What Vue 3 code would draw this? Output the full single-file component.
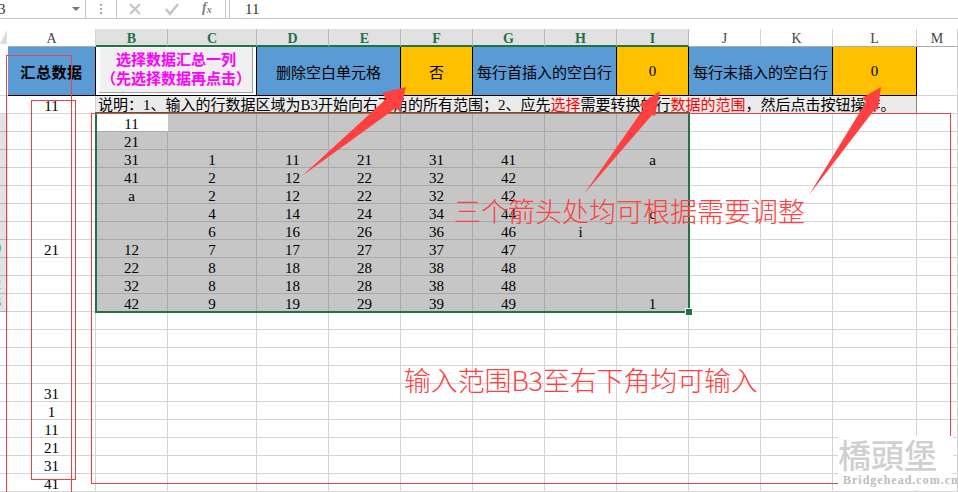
<script setup>
const columns = ['A', 'B', 'C', 'D', 'E', 'F', 'G', 'H', 'I', 'J', 'K', 'L', 'M']
const selectedColumns = 'BCDEFGHI'

const bands = [
  { text: '删除空白单元格', cls: 'blue span2' },
  { text: '否', cls: 'gold' },
  { text: '每行首插入的空白行', cls: 'blue span2' },
  { text: '0', cls: 'gold' },
  { text: '每行末插入的空白行', cls: 'blue span2' },
  { text: '0', cls: 'gold' }
]

const selectedData = {
  3: ['11', '', '', '', '', '', '', ''],
  4: ['21', '', '', '', '', '', '', ''],
  5: ['31', '1', '11', '21', '31', '41', '', 'a'],
  6: ['41', '2', '12', '22', '32', '42', '', ''],
  7: ['a', '2', '12', '22', '32', '42', '', ''],
  8: ['', '4', '14', '24', '34', '44', '', 'c'],
  9: ['', '6', '16', '26', '36', '46', 'i', ''],
  10: ['12', '7', '17', '27', '37', '47', '', ''],
  11: ['22', '8', '18', '28', '38', '48', '', ''],
  12: ['32', '8', '18', '28', '38', '48', '', ''],
  13: ['42', '9', '19', '29', '39', '49', '', '1']
}
const summary = { 10: '21', 18: '31', 19: '1', 20: '11', 21: '21', 22: '31', 23: '41' }

const rows = []
for (let n = 3; n <= 23; n++) {
  rows.push({ n, summary: summary[n] || '', data: selectedData[n] || null })
}

const arrows = [
  '302,176 386,99 382,93 406,87 400,112 396,108',
  '584,194 644,108 639,105 660,91 655,116 652,115',
  '809,195 866,102 862,98 881,87 878,110 875,109'
]
</script>

<template>
  <div class="page">
    <div class="toolbar">
      <div class="namebox">
        <span class="nameval">3</span>
        <i class="caret"></i>
      </div>
      <div class="grip"><i></i><i></i><i></i></div>
      <div class="fxbtns">
        <svg width="14" height="14" viewBox="0 0 14 14"><path d="M2 2l10 10M12 2L2 12" stroke="#c4c4c4" stroke-width="2" fill="none" /></svg>
        <svg width="16" height="14" viewBox="0 0 16 14"><path d="M2 7l4 5 8-10" stroke="#c4c4c4" stroke-width="2.4" fill="none" /></svg>
        <span class="fx">f<sub>x</sub></span>
      </div>
      <div class="formula">11</div>
    </div>

    <div class="sheet">
      <div class="corner"><i></i></div>
      <div
        v-for="c in columns"
        :key="c"
        class="colhead"
        :class="{ on: selectedColumns.includes(c) }"
      >{{ c }}</div>

      <div class="rowhead"></div>
      <div class="band blue title">汇总数据</div>
      <div class="band span2 btnwrap">
        <div class="btn">选择数据汇总一列<br />（先选择数据再点击）</div>
      </div>
      <div v-for="(b, i) in bands" :key="i" class="band" :class="b.cls">{{ b.text }}</div>
      <div class="cell"></div>

      <div class="rowhead"></div>
      <div class="cell">11</div>
      <div class="note">说明：1、输入的行数据区域为B3开始向右下角的所有范围；2、应先<span class="hot">选择</span>需要转换的行<span class="hot">数据的范围</span>，然后点击按钮操作。</div>
      <div class="cell"></div>

      <template v-for="r in rows" :key="r.n">
        <div class="rowhead" :class="{ on: r.data }"><span>{{ r.data ? r.n : '' }}</span></div>
        <div class="cell">{{ r.summary }}</div>
        <template v-if="r.data">
          <div
            v-for="(v, i) in r.data"
            :key="i"
            class="cell sel"
            :class="{ active: r.n === 3 && i === 0 }"
          >{{ v }}</div>
        </template>
        <template v-else>
          <div v-for="i in 8" :key="i" class="cell"></div>
        </template>
        <div v-for="i in 4" :key="'t' + i" class="cell"></div>
      </template>
    </div>

    <div class="selection"><i class="handle"></i></div>

    <div class="mark m1"></div>
    <div class="mark m2"></div>
    <div class="mark m3"></div>

    <svg class="arrows" width="958" height="492" viewBox="0 0 958 492">
      <polygon v-for="(p, i) in arrows" :key="i" :points="p" fill="#ff4040" />
    </svg>

    <div class="say say1">三个箭头处均可根据需要调整</div>
    <div class="say say2">输入范围B3至右下角均可输入</div>

    <div class="stamp">
      <div class="stamp-cn">橋頭堡</div>
      <div class="stamp-en">Bridgehead.com.cn</div>
    </div>
  </div>
</template>

<style scoped>
.page {
  position: relative;
  width: 958px;
  height: 492px;
  overflow: hidden;
  background: #fff;
  font-family: "Liberation Serif", "Noto Sans CJK SC", serif;
  font-size: 15px;
  color: #000;
}

.toolbar {
  display: flex;
  height: 19px;
  margin-bottom: 10px;
  border-bottom: 1px solid #c6c6c6;
  box-sizing: border-box;
}
.namebox {
  width: 86px;
  box-sizing: border-box;
  border-right: 1px solid #c6c6c6;
  display: flex;
  align-items: center;
  justify-content: space-between;
  padding-right: 5px;
  overflow: hidden;
}
.nameval {
  margin-left: -2px;
  color: #333;
}
.caret {
  width: 0;
  height: 0;
  border-left: 4px solid transparent;
  border-right: 4px solid transparent;
  border-top: 4px solid #777;
}
.grip {
  width: 30px;
  display: flex;
  flex-direction: column;
  align-items: center;
  justify-content: center;
  gap: 2px;
}
.grip i {
  width: 2px;
  height: 2px;
  background: #a8a8a8;
}
.fxbtns {
  width: 110px;
  box-sizing: border-box;
  border-left: 1px solid #c6c6c6;
  border-right: 1px solid #c6c6c6;
  display: flex;
  align-items: center;
  padding-left: 11px;
  gap: 22px;
}
.fx {
  font-style: italic;
  font-weight: bold;
  font-size: 14px;
  color: #808080;
  line-height: 14px;
}
.fx sub {
  font-size: 10px;
  vertical-align: -1px;
}
.formula {
  flex: 1;
  margin-left: 3px;
  padding-left: 15px;
  border-left: 1px solid #c6c6c6;
  line-height: 19px;
  color: #333;
}

.sheet {
  display: grid;
  grid-template-columns: 8px 88px 72px 89px repeat(8, 72px) 84px 41px;
  grid-template-rows: 18px 49px repeat(22, 18px);
}
.corner {
  background: #fff;
  position: relative;
  overflow: hidden;
}
.corner i {
  position: absolute;
  left: 0;
  top: 1px;
  width: 7px;
  height: 14px;
  background: #dcdcdc;
  clip-path: polygon(100% 0, 100% 100%, 0 100%);
}
.colhead {
  box-sizing: border-box;
  border-right: 1px solid #d4d4d4;
  border-bottom: 1px solid #ababab;
  text-align: center;
  font-size: 14px;
  line-height: 19px;
  color: #444;
}
.colhead.on {
  background: #e1e1e1;
  border-right-color: #b8b8b8;
  border-bottom: 2px solid #217346;
  color: #217346;
  font-weight: bold;
}
.rowhead {
  box-sizing: border-box;
  border-bottom: 1px solid #d4d4d4;
  overflow: hidden;
  white-space: nowrap;
}
.rowhead span {
  display: block;
  width: 24px;
  margin-left: -18px;
  text-align: center;
  line-height: 18px;
  color: #217346;
  font-size: 14px;
}
.rowhead.on {
  background: #e3e3e3;
  border-bottom-color: #b4b4b4;
}
.band {
  box-sizing: border-box;
  border-right: 1px solid #000;
  border-bottom: 1px solid #000;
  display: flex;
  align-items: center;
  justify-content: center;
  white-space: nowrap;
}
.span2 {
  grid-column: span 2;
}
.blue {
  background: #5b9bd5;
}
.gold {
  background: #ffc000;
}
.title {
  font-weight: bold;
  letter-spacing: 0.6px;
  padding-top: 1px;
}
.btnwrap {
  background: #fff;
  padding: 0 3px 2px;
  align-items: stretch;
}
.btn {
  flex: 1;
  background: #f0f0f0;
  box-shadow: inset -1px -1px 0 #a0a0a0, inset 1px 1px 0 #fff;
  text-align: center;
  color: #ff00ff;
  font-weight: bold;
  line-height: 19px;
  padding-top: 4px;
}
.note {
  grid-column: span 11;
  box-sizing: border-box;
  background: #ebebeb;
  border-right: 1px solid #8a8a8a;
  border-bottom: 1px solid #d4d4d4;
  padding-left: 2px;
  line-height: 18px;
  white-space: nowrap;
  overflow: hidden;
}
.hot {
  color: #ff0000;
}
.cell {
  box-sizing: border-box;
  border-right: 1px solid #d4d4d4;
  border-bottom: 1px solid #d4d4d4;
  text-align: center;
  line-height: 20px;
  overflow: hidden;
  white-space: nowrap;
}
.cell.sel {
  background: #c6c6c6;
  border-right-color: #a9a9a9;
  border-bottom-color: #a9a9a9;
}
.cell.sel.active {
  background: #fff;
  border-right-color: #fff;
}

.selection {
  position: absolute;
  left: 95px;
  top: 112px;
  width: 595px;
  height: 201px;
  box-sizing: border-box;
  border: 2px solid #217346;
}
.handle {
  position: absolute;
  right: -4px;
  bottom: -4px;
  width: 6px;
  height: 6px;
  background: #217346;
  outline: 1px solid #fff;
}

.mark {
  position: absolute;
  box-sizing: border-box;
  border: 1px solid #f04040;
}
.m1 {
  left: 6px;
  top: 55px;
  width: 66px;
  height: 460px;
}
.m2 {
  left: 31px;
  top: 100px;
  width: 45px;
  height: 380px;
}
.m3 {
  left: 91px;
  top: 113px;
  width: 860px;
  height: 371px;
}

.arrows {
  position: absolute;
  left: 0;
  top: 0;
}

.say {
  position: absolute;
  font-family: "Noto Sans CJK SC", sans-serif;
  font-size: 27px;
  font-weight: 300;
  line-height: 34px;
  color: #ff4040;
  white-space: nowrap;
}
.say1 {
  left: 454px;
  top: 194px;
}
.say2 {
  left: 404px;
  top: 363px;
  letter-spacing: -0.15px;
}

.stamp {
  position: absolute;
  left: 838px;
  top: 436px;
  width: 115px;
  height: 54px;
  background: #fff;
}
.stamp-cn {
  font-family: "Noto Sans CJK TC", sans-serif;
  font-size: 33px;
  font-weight: 500;
  line-height: 36px;
  color: #d0d0d0;
  white-space: nowrap;
}
.stamp-en {
  margin-left: 5px;
  margin-top: 1px;
  font-size: 12px;
  font-weight: bold;
  letter-spacing: 1px;
  line-height: 14px;
  color: #bdbdbd;
  white-space: nowrap;
}
</style>

<style>
html,
body {
  margin: 0;
  overflow: hidden;
}
</style>
